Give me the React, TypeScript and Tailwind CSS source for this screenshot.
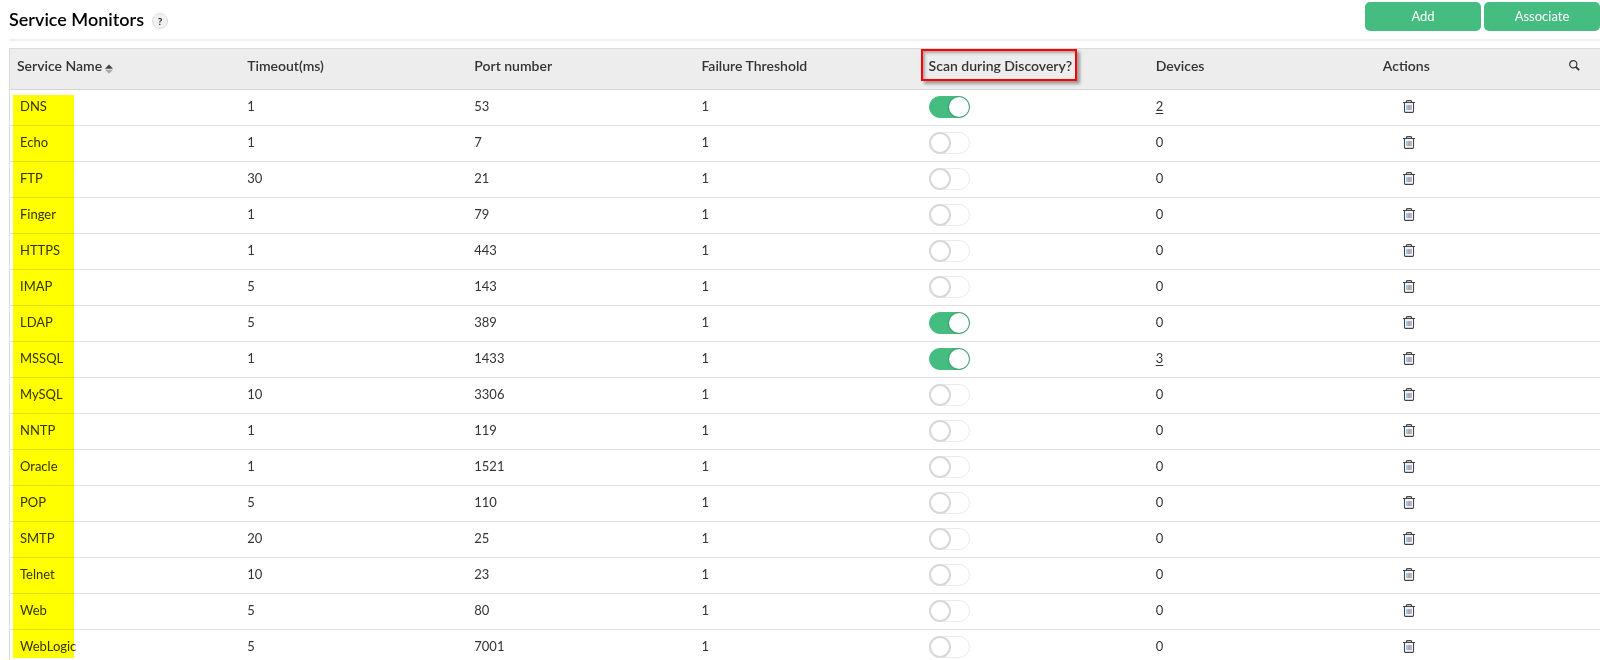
import { useState } from 'react';

interface Monitor {
  name: string;
  timeout: number;
  port: number;
  threshold: number;
  scan: boolean;
  devices: number;
}

const initialMonitors: Monitor[] = [
  { name: 'DNS', timeout: 1, port: 53, threshold: 1, scan: true, devices: 2 },
  { name: 'Echo', timeout: 1, port: 7, threshold: 1, scan: false, devices: 0 },
  { name: 'FTP', timeout: 30, port: 21, threshold: 1, scan: false, devices: 0 },
  { name: 'Finger', timeout: 1, port: 79, threshold: 1, scan: false, devices: 0 },
  { name: 'HTTPS', timeout: 1, port: 443, threshold: 1, scan: false, devices: 0 },
  { name: 'IMAP', timeout: 5, port: 143, threshold: 1, scan: false, devices: 0 },
  { name: 'LDAP', timeout: 5, port: 389, threshold: 1, scan: true, devices: 0 },
  { name: 'MSSQL', timeout: 1, port: 1433, threshold: 1, scan: true, devices: 3 },
  { name: 'MySQL', timeout: 10, port: 3306, threshold: 1, scan: false, devices: 0 },
  { name: 'NNTP', timeout: 1, port: 119, threshold: 1, scan: false, devices: 0 },
  { name: 'Oracle', timeout: 1, port: 1521, threshold: 1, scan: false, devices: 0 },
  { name: 'POP', timeout: 5, port: 110, threshold: 1, scan: false, devices: 0 },
  { name: 'SMTP', timeout: 20, port: 25, threshold: 1, scan: false, devices: 0 },
  { name: 'Telnet', timeout: 10, port: 23, threshold: 1, scan: false, devices: 0 },
  { name: 'Web', timeout: 5, port: 80, threshold: 1, scan: false, devices: 0 },
  { name: 'WebLogic', timeout: 5, port: 7001, threshold: 1, scan: false, devices: 0 },
];

function TrashIcon() {
  return (
    <svg width="12" height="13" viewBox="0 0 12 13" fill="none" stroke="#444" aria-hidden="true">
      <path d="M0 2.5H12" strokeWidth="1.1" />
      <path d="M3.5 2.3V1.4Q3.5 0.6 4.3 0.6H7.7Q8.5 0.6 8.5 1.4V2.3" strokeWidth="1.1" />
      <path d="M1.5 2.5V11.5Q1.5 12.4 2.4 12.4H9.6Q10.5 12.4 10.5 11.5V2.5" strokeWidth="1.1" />
      <path d="M4 4.8V10.2" stroke="#4a90c8" />
      <path d="M6 4.8V10.2" stroke="#4a5a80" />
      <path d="M8 4.8V10.2" stroke="#85608a" />
    </svg>
  );
}

function SearchIcon() {
  return (
    <svg width="11" height="11" viewBox="0 0 11 11" fill="none" stroke="#333" aria-hidden="true">
      <circle cx="4.3" cy="4.3" r="3.6" strokeWidth="1.2" />
      <path d="M6.8 6.9L10.2 10.1" strokeWidth="1.9" />
    </svg>
  );
}

function SortIcon() {
  return (
    <svg width="8" height="10" viewBox="0 0 8 10" aria-hidden="true">
      <path d="M4 0.5L8 4.7H0Z" fill="#444" />
      <path d="M0 5.7H8L4 9.7Z" fill="#aaa" />
    </svg>
  );
}

function Toggle({ label, checked, onChange }: { label: string; checked: boolean; onChange: () => void }) {
  return (
    <input
      type="checkbox"
      role="switch"
      aria-label={label}
      checked={checked}
      onChange={onChange}
      className="flex h-[22px] w-[41px] cursor-pointer appearance-none items-center rounded-full border border-[#ebebeb] bg-white before:-ml-px before:size-[22px] before:rounded-full before:border-2 before:border-[#d8d8d8] before:bg-white before:content-[''] checked:border-[#45bc80] checked:bg-[#45bc80] checked:before:ml-[19px] checked:before:size-5 checked:before:border-0 checked:before:shadow-[0_0_2px_rgba(0,0,0,0.5)]"
    />
  );
}

export default function App() {
  const [monitors, setMonitors] = useState(initialMonitors);

  const toggleScan = (name: string) =>
    setMonitors((list) => list.map((m) => (m.name === name ? { ...m, scan: !m.scan } : m)));

  const remove = (name: string) => setMonitors((list) => list.filter((m) => m.name !== name));

  return (
    <div className="h-screen overflow-hidden bg-white pl-[9px] font-[Lato,sans-serif] text-[13px] text-[#333]">
      {/* Header */}
      <header className="mb-[7px] flex h-[41px] items-start justify-between border-b-2 border-[#efefef] pt-[2px]">
        <div className="flex items-center gap-2 pt-1">
          <h1 className="text-lg leading-[26px] font-semibold text-black">Service Monitors</h1>
          <button
            type="button"
            aria-label="Help"
            className="mt-[3px] flex size-4 items-center justify-center rounded-full border border-[#ddd] bg-[#f1f1f1] text-[10px] leading-none font-bold text-[#222]"
          >
            ?
          </button>
        </div>
        <div className="flex gap-[3px]">
          <button type="button" className="h-[29px] w-[116px] rounded-[5px] bg-[#45bc80] text-white">
            Add
          </button>
          <button type="button" className="h-[29px] w-[116px] rounded-[5px] bg-[#45bc80] text-white">
            Associate
          </button>
        </div>
      </header>

      {/* Monitor table */}
      <div className="relative border-l border-[#dcdcdc]">
        <table className="w-full table-fixed border-collapse text-left">
          <thead className="text-sm">
            <tr className="h-[41px] border-t border-b border-t-[#dcdcdc] border-b-[#d4d4d4] bg-[#ededed] *:pb-[7px] *:font-semibold">
              <th className="pl-[7px]">
                <button type="button" className="flex items-center gap-[3px]">
                  Service Name
                  <span className="pt-[6px]">
                    <SortIcon />
                  </span>
                </button>
              </th>
              <th className="pl-[10px]">Timeout(ms)</th>
              <th className="pl-[10px]">Port number</th>
              <th className="pl-[10px]">Failure Threshold</th>
              <th className="pl-[10px]">
                <span className="relative">
                  Scan during Discovery?
                  <span className="pointer-events-none absolute -top-[8px] -right-[5px] -bottom-[7px] -left-2 border-2 border-[#f00] shadow-[3px_3px_3px_rgba(0,0,0,0.35),inset_2px_2px_3px_rgba(0,0,0,0.3)]" />
                </span>
              </th>
              <th className="pl-[10px]">Devices</th>
              <th className="pr-5 pl-[10px]">
                <div className="flex items-center justify-between">
                  Actions
                  <button type="button" aria-label="Search">
                    <SearchIcon />
                  </button>
                </div>
              </th>
            </tr>
          </thead>
          <tbody>
            {monitors.map((m) => (
              <tr key={m.name} className="h-9 border-b border-[#e0e0e0] *:pt-0 *:pb-[2px] *:pl-[10px]">
                <td>{m.name}</td>
                <td>{m.timeout}</td>
                <td>{m.port}</td>
                <td>{m.threshold}</td>
                <td>
                  <Toggle
                    label={`Scan ${m.name} during discovery`}
                    checked={m.scan}
                    onChange={() => toggleScan(m.name)}
                  />
                </td>
                <td>
                  {m.devices > 0 ? (
                    <a href="#devices" className="underline underline-offset-2">
                      {m.devices}
                    </a>
                  ) : (
                    m.devices
                  )}
                </td>
                <td>
                  <button
                    type="button"
                    aria-label={`Delete ${m.name}`}
                    onClick={() => remove(m.name)}
                    className="ml-5 flex"
                  >
                    <TrashIcon />
                  </button>
                </td>
              </tr>
            ))}
          </tbody>
        </table>

        {/* Marker over the service names */}
        <div className="pointer-events-none absolute top-[47px] bottom-2 left-[3px] w-[61px] bg-[#ff0] mix-blend-multiply" />
      </div>
    </div>
  );
}
